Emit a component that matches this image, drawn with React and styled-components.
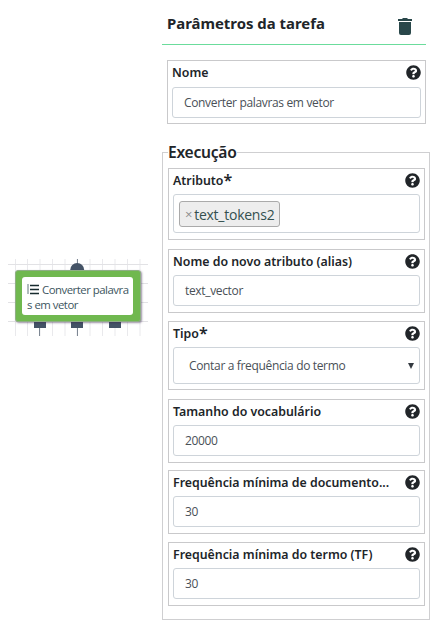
import React from "react";
import styled, { createGlobalStyle } from "styled-components";

const GlobalStyle = createGlobalStyle`
  * { box-sizing: border-box; }
  body {
    margin: 0;
    background: #fff;
    color: #212529;
    font-family: "Noto Sans", "Open Sans", sans-serif;
  }
`;

const Page = styled.main`
  display: flex;
  width: 440px;
  height: 634px;
  overflow: hidden;
`;

const Canvas = styled.section`
  position: relative;
  flex: none;
  width: 140px;
  height: 77px;
  margin: 259px 0 0 8px;
`;

const Wires = styled.svg`
  display: block;
`;

const TaskNode = styled.div`
  position: absolute;
  left: 7px;
  top: 11px;
  width: 126px;
  height: 52px;
  padding: 6px 7px 6px 6px;
  border: 1px solid #8fae85;
  border-radius: 3px;
  background: #70b84f;
  box-shadow: 1px 1px 2px rgba(60, 40, 80, 0.5);
`;

const TaskLabel = styled.div`
  height: 38px;
  padding: 5px 0 0 5px;
  border-radius: 3px;
  background: #fff;
  color: #3c5560;
  font-family: "Open Sans", "Noto Sans", sans-serif;
  font-size: 11.4px;
  letter-spacing: -0.5px;
  line-height: 15px;
  white-space: nowrap;
`;

const ListIcon = styled.svg`
  vertical-align: -1px;
  margin-right: 3px;
`;

const Panel = styled.section`
  flex: none;
  width: 268px;
  margin-left: 14px;
`;

const Header = styled.header`
  display: flex;
  justify-content: space-between;
  width: 264px;
  height: 45px;
  padding: 13px 14px 0 5px;
  border-bottom: 1px solid #6bdc9c;
`;

const Title = styled.h1`
  margin: 0;
  font-size: 14.9px;
  font-weight: 700;
  line-height: 21px;
`;

const TrashIcon = styled.svg`
  margin-top: 5px;
`;

const Field = styled.div`
  height: ${(p) => p.$height}px;
  margin-bottom: ${(p) => p.$gap || 0}px;
  padding: 4px 4px 0;
  border: 1px solid #c9c9cb;
`;

const NameArea = styled.div`
  width: 259px;
  margin: 15px 0 0 5px;
`;

const FieldHead = styled.div`
  display: flex;
  justify-content: space-between;
  height: ${(p) => p.$height || 21}px;
`;

const Label = styled.label`
  font-size: 12.35px;
  font-weight: 600;
  line-height: 16px;
  white-space: nowrap;
`;

const Required = styled.span`
  font-size: 16px;
  line-height: 0;
  vertical-align: -0.5px;
`;

const Control = styled.div`
  display: flex;
  align-items: center;
  justify-content: space-between;
  height: ${(p) => p.$height || 31}px;
  padding: 0 5px 0 ${(p) => p.$inset || 11}px;
  border: 1px solid #ced4da;
  border-radius: 3px;
  color: #495057;
  font-family: "Open Sans", "Noto Sans", sans-serif;
  font-size: 12px;
  letter-spacing: -0.34px;
  white-space: nowrap;
`;

const Tag = styled.span`
  display: flex;
  align-items: center;
  gap: 2px;
  height: 26px;
  margin-top: 1px;
  padding: 0 5px;
  border: 1px solid #aaa;
  border-radius: 3px;
  background: #ededed;
  color: #34504f;
  font-size: 14px;
  letter-spacing: -0.25px;
`;

const TagRemove = styled.span`
  color: #8d8d8d;
  font-size: 13px;
`;

const Group = styled.fieldset`
  width: 268px;
  height: 478px;
  min-width: 0;
  margin: 18px 0 0;
  padding: 6px 5px 0 4px;
  border: 1px solid #cfcfd1;
`;

const Legend = styled.legend`
  height: 20px;
  margin-left: 1px;
  padding: 0;
  font-size: 15.6px;
  font-weight: 600;
  letter-spacing: -0.25px;
  line-height: 20px;
`;

const Fields = styled.div`
  display: flex;
  flex-direction: column;
  width: 257px;
  margin-left: 1px;
`;

const Arrow = styled.svg`
  flex: none;
`;

function Help() {
  return (
    <svg width="15" height="15" viewBox="0 0 512 512" aria-label="Ajuda">
      <path
        fill="#212529"
        d="M504 256c0 136.997-111.043 248-248 248S8 392.997 8 256C8 119.083 119.043 8 256 8s248 111.083 248 248zM262.655 90c-54.497 0-89.255 22.957-116.549 63.758-3.536 5.286-2.353 12.415 2.715 16.258l34.699 26.31c5.205 3.947 12.621 3.008 16.665-2.122 17.864-22.658 30.113-35.797 57.303-35.797 20.429 0 45.698 13.148 45.698 32.958 0 14.976-12.363 22.667-32.534 33.976C247.128 238.528 216 254.941 216 296v4c0 6.627 5.373 12 12 12h56c6.627 0 12-5.373 12-12v-1.333c0-28.462 83.186-29.647 83.186-106.667 0-58.002-60.165-102-116.531-102zM256 338c-25.365 0-46 20.635-46 46 0 25.364 20.635 46 46 46s46-20.636 46-46c0-25.365-20.635-46-46-46z"
      />
    </svg>
  );
}

function FormField({ label, required, height, gap, headHeight, children }) {
  return (
    <Field $height={height} $gap={gap}>
      <FieldHead $height={headHeight}>
        <Label>
          {label}
          {required && <Required>*</Required>}
        </Label>
        <Help />
      </FieldHead>
      {children}
    </Field>
  );
}

const columns = [7.5, 19.5, 32, 44.5, 57, 69, 82, 94.5, 107, 119.5, 132];
const rows = [5.5, 24.5, 43.5, 62.5];

export default function App() {
  return (
    <>
      <GlobalStyle />
      <Page>
        <Canvas>
          <Wires width="140" height="77">
            {columns.map((x) => (
              <path key={x} d={`M${x} 0V77`} stroke="#e9e9ec" />
            ))}
            {rows.map((y) => (
              <path key={y} d={`M0 ${y}H140`} stroke="#e2e2e5" />
            ))}
            <path d="M69.5 0V6M31.5 68V77M69.5 68V77" stroke="#7d8793" />
            <circle cx="69.2" cy="11" r="7" fill="#445366" />
            <path d="M26 63h12v6H26zM63 63h12v6H63zM101 63h12v6h-12z" fill="#445366" />
          </Wires>
          <TaskNode>
            <TaskLabel>
              <ListIcon width="12" height="11" viewBox="0 0 12 11">
                <path d="M1 0V10" stroke="#62777d" />
                <path d="M3 1.5h9M3 5.5h9M3 9.5h9" stroke="#172b2e" strokeWidth="1.6" />
              </ListIcon>
              Converter palavra
              <br />s em vetor
            </TaskLabel>
          </TaskNode>
        </Canvas>
        <Panel>
          <Header>
            <Title>Parâmetros da tarefa</Title>
            <TrashIcon width="14" height="17" viewBox="0 0 14 17">
              <path
                fill="#29474a"
                d="M0 1h4l1-1h4l1 1h4v2H0zM1 4h12v11q0 2-2 2H3q-2 0-2-2z"
              />
            </TrashIcon>
          </Header>
          <NameArea>
            <FormField label="Nome" height={64} headHeight={22}>
              <Control>Converter palavras em vetor</Control>
            </FormField>
          </NameArea>
          <Group>
            <Legend>Execução</Legend>
            <Fields>
              <FormField label="Atributo" required height={72} gap={9}>
                <Control $height={39} $inset={5}>
                  <Tag>
                    <TagRemove>×</TagRemove>text_tokens2
                  </Tag>
                </Control>
              </FormField>
              <FormField label="Nome do novo atributo (alias)" height={64} gap={8}>
                <Control>text_vector</Control>
              </FormField>
              <FormField label="Tipo" required height={69} gap={9}>
                <Control $height={37} $inset={15}>
                  Contar a frequência do termo
                  <Arrow width="6" height="6" viewBox="0 0 6 6">
                    <path d="M0 0h6L3 6z" fill="#343a40" />
                  </Arrow>
                </Control>
              </FormField>
              <FormField label="Tamanho do vocabulário" height={64} gap={7}>
                <Control>20000</Control>
              </FormField>
              <FormField label="Frequência mínima de documento..." height={64} gap={8}>
                <Control>30</Control>
              </FormField>
              <FormField label="Frequência mínima do termo (TF)" height={64}>
                <Control>30</Control>
              </FormField>
            </Fields>
          </Group>
        </Panel>
      </Page>
    </>
  );
}
